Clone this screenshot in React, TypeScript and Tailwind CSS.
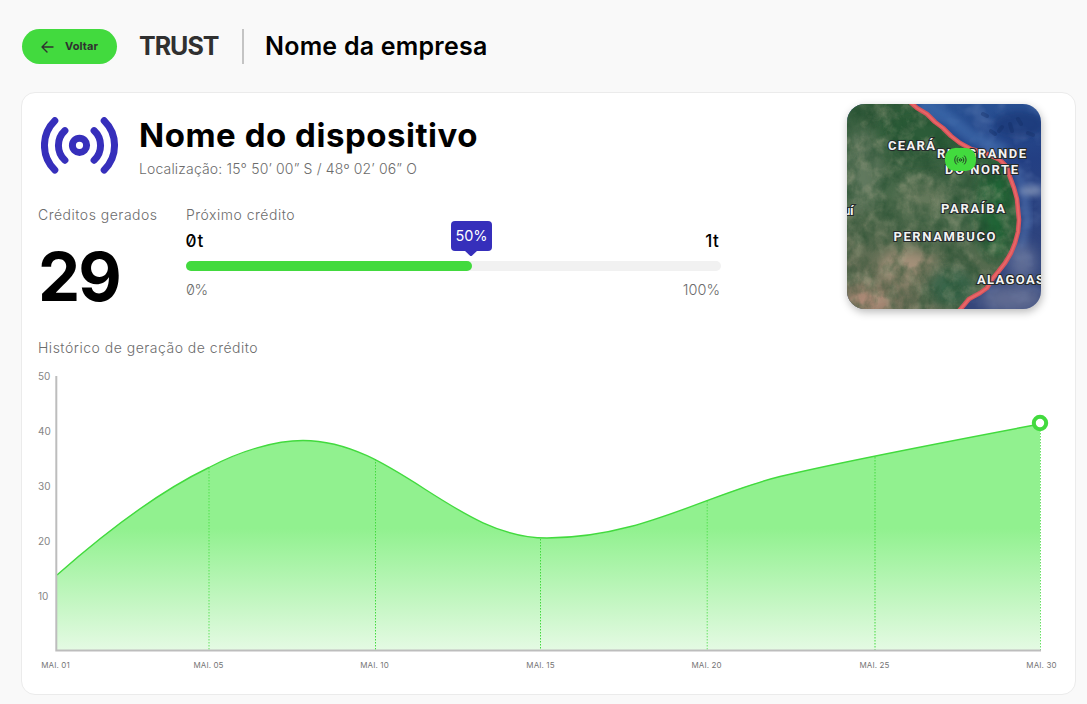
import React from "react";

const COAST =
  "M63 -2 L70 4 L80 10 L88 18 L96 24 L104 32 L113 39 L124 45 L138 49 L153 56 L160 63 L163 73 L167 84 L170 95 L172 116 L171 128 L168 139 L164 149 L158 159 L151 168 L146 174 L140 184 L133 189 L122 195 L117 201 L111 208";

const MAP_LABELS = [
  { text: "CEARÁ", x: 41, y: 46, w: 47 },
  { text: "RIO GRANDE", x: 90, y: 54, w: 89 },
  { text: "DO NORTE", x: 98, y: 69.5, w: 73 },
  { text: "uí", x: -3.5, y: 111, w: 10 },
  { text: "PARAÍBA", x: 94, y: 108.5, w: 64 },
  { text: "PERNAMBUCO", x: 46.5, y: 136.5, w: 102 },
  { text: "ALAGOAS", x: 130, y: 180, w: 67 },
];

const Y_TICKS = [50, 40, 30, 20, 10];
const GUIDES = [
  { x: 209, y: 468, o: 0.8 },
  { x: 375.5, y: 459, o: 1 },
  { x: 540.5, y: 539, o: 1 },
  { x: 707.2, y: 501, o: 0.75 },
  { x: 875, y: 457, o: 1 },
  { x: 1040.5, y: 424, o: 0.8 },
];
const CURVE =
  "M57 575 C100 537 152 495 209 467.5 C240 451 275 440.5 303 440.5 C395 440.5 455 538 547 538 C640 538 705 495 780 476.5 C840 462 950 441 1040 424";

function BroadcastIcon({ className, stroke = 7 }: { className: string; stroke?: number }) {
  return (
    <svg viewBox="0 0 78 57" className={className} fill="none" stroke="currentColor" strokeWidth={stroke} strokeLinecap="round">
      <circle cx="38.5" cy="28.3" r="7.1" />
      <path d="M53.1 13.6A20.2 20.2 0 0 1 53.1 43.2" />
      <path d="M23.9 13.6A20.2 20.2 0 0 0 23.9 43.2" />
      <path d="M63.2 3.7A34.5 34.5 0 0 1 63.2 53" />
      <path d="M13.8 3.7A34.5 34.5 0 0 0 13.8 53" />
    </svg>
  );
}

function DeviceMap() {
  return (
    <div className="relative mt-[11px] mr-[34px] h-[205px] w-[194px] shrink-0 overflow-hidden rounded-[18px] shadow-[1px_3px_8px_rgba(0,0,0,0.28)]">
      <svg viewBox="0 0 194 205" className="block h-full w-full">
        <defs>
          <linearGradient id="land" x1="0.6" y1="0" x2="0.3" y2="1">
            <stop offset="0" stopColor="#315b3a" />
            <stop offset="0.5" stopColor="#47694a" />
            <stop offset="1" stopColor="#6c6f58" />
          </linearGradient>
          <linearGradient id="sea" x1="0" y1="0" x2="0.15" y2="1">
            <stop offset="0" stopColor="#2a5799" />
            <stop offset="0.4" stopColor="#233f83" />
            <stop offset="1" stopColor="#34467b" />
          </linearGradient>
          <filter id="shade" x="0" y="0" width="100%" height="100%" colorInterpolationFilters="sRGB">
            <feTurbulence type="fractalNoise" baseFrequency="0.07 0.05" numOctaves="5" seed="8" />
            <feColorMatrix values="0 0 0 0 0.1  0 0 0 0 0.28  0 0 0 0 0.16  1.8 0 0 0 -0.7" />
          </filter>
          <filter id="light" x="0" y="0" width="100%" height="100%" colorInterpolationFilters="sRGB">
            <feTurbulence type="fractalNoise" baseFrequency="0.06 0.06" numOctaves="5" seed="21" />
            <feColorMatrix values="0 0 0 0 0.62  0 0 0 0 0.63  0 0 0 0 0.52  0 1.8 0 0 -0.8" />
          </filter>
          <filter id="waves" x="0" y="0" width="100%" height="100%" colorInterpolationFilters="sRGB">
            <feTurbulence type="fractalNoise" baseFrequency="0.04 0.05" numOctaves="3" seed="5" />
            <feColorMatrix values="0 0 0 0 0.45  0 0 0 0 0.55  0 0 0 0 0.75  1.8 0 0 0 -0.85" />
          </filter>
          <filter id="soft" x="-50%" y="-50%" width="200%" height="200%">
            <feGaussianBlur stdDeviation="7" />
          </filter>
          <filter id="haze" x="-50%" y="-50%" width="200%" height="200%">
            <feGaussianBlur stdDeviation="3" />
          </filter>
          <clipPath id="landClip">
            <path d={`${COAST} L-5 210 L-5 -5 Z`} />
          </clipPath>
        </defs>
        <rect width="194" height="205" fill="url(#sea)" />
        <rect width="194" height="205" filter="url(#waves)" opacity="0.5" />
        <path d="M66 0L96 20L116 36L150 50" transform="translate(9 -3)" fill="none" stroke="#4472b2" strokeWidth="13" opacity="0.55" filter="url(#haze)" />
        <path d="M165 63L174 95L176 116L170 145" transform="translate(4 0)" fill="none" stroke="#5277b4" strokeWidth="8" opacity="0.6" filter="url(#haze)" />
        <ellipse cx="172" cy="20" rx="25" ry="13" fill="#17336f" opacity="0.5" filter="url(#haze)" />
        <ellipse cx="184" cy="87" rx="12" ry="5" fill="#8f9fbe" opacity="0.7" filter="url(#haze)" />
        <ellipse cx="165" cy="195" rx="32" ry="14" fill="#737b9b" opacity="0.7" filter="url(#soft)" />
        <ellipse cx="175" cy="158" rx="14" ry="18" fill="#7480a2" opacity="0.7" filter="url(#soft)" />
        <path d="M144 27l4 3M152 27l3-4M163 20l2 7M171 15l3 5M181 29l5 2M136 10l4 2" fill="none" stroke="#112b60" strokeWidth="4" strokeLinecap="round" opacity="0.35" />
        <g clipPath="url(#landClip)">
          <rect width="194" height="205" fill="url(#land)" />
          <ellipse cx="72" cy="28" rx="42" ry="28" fill="#285a36" opacity="0.65" filter="url(#soft)" />
          <ellipse cx="15" cy="65" rx="18" ry="42" fill="#6d8068" opacity="0.7" filter="url(#soft)" />
          <ellipse cx="150" cy="105" rx="18" ry="48" fill="#1f6434" opacity="0.9" filter="url(#soft)" />
          <ellipse cx="77" cy="94" rx="27" ry="18" fill="#758165" opacity="0.65" filter="url(#soft)" />
          <ellipse cx="60" cy="163" rx="28" ry="18" fill="#b09680" opacity="0.85" filter="url(#soft)" />
          <ellipse cx="23" cy="196" rx="25" ry="15" fill="#b98f7d" opacity="0.85" filter="url(#soft)" />
          <ellipse cx="105" cy="184" rx="24" ry="20" fill="#36654a" opacity="0.9" filter="url(#soft)" />
          <rect width="194" height="205" filter="url(#light)" opacity="0.7" />
          <rect width="194" height="205" filter="url(#shade)" opacity="0.65" />
        </g>
        <path d={COAST} fill="none" stroke="#d9545b" strokeWidth="4.6" strokeLinejoin="round" />
        <path d={COAST} fill="none" stroke="#ee6e6c" strokeWidth="2" strokeLinejoin="round" opacity="0.7" />
        {MAP_LABELS.map((l) => (
          <text
            key={l.text}
            x={l.x}
            y={l.y}
            textLength={l.w}
            className="fill-[#f3f3f3] stroke-[#252b2b] font-['Roboto',sans-serif] text-[13px] font-bold"
            strokeWidth="2.2"
            paintOrder="stroke"
          >
            {l.text}
          </text>
        ))}
      </svg>
      <div className="absolute top-[44px] left-[98px] flex h-[23px] w-[31px] items-center justify-center rounded-[10px] bg-[#42da3e] text-[#26372a]">
        <BroadcastIcon className="h-[10px] w-[13px]" stroke={6} />
      </div>
    </div>
  );
}

function ProgressPanel() {
  return (
    <div className="w-[535px]">
      <div className="h-5 text-[14px] leading-5 font-light tracking-[0.5px] text-[#6c6c6c]">Próximo crédito</div>
      <div className="mt-[6px] flex h-5 justify-between pr-[2px] text-[17px] leading-5 font-medium text-black">
        <span className="ml-[-0.5px] tracking-[0.8px] [font-feature-settings:'zero']">0t</span>
        <span className="tracking-[0.3px]">1t</span>
      </div>
      <div className="relative mt-[10px] h-[10px] rounded-full bg-[#f1f1f1]">
        <div className="h-full w-[286px] rounded-full bg-[#42da3e]" />
        <div className="absolute -top-[40px] left-[265px] flex h-[30px] w-[41px] items-center justify-center rounded-[4px] bg-[#362fbb] text-[14.5px] text-white">
          50%
          <svg viewBox="0 0 14 6" className="absolute top-[29px] left-[13px] h-[6px] w-[14px] fill-[#362fbb]">
            <path d="M0 0h14L8.2 5.4q-1.2 1-2.4 0Z" />
          </svg>
        </div>
      </div>
      <div className="mt-[9px] flex h-5 justify-between pr-[1px] text-[14.5px] leading-5 font-light text-[#6c6c6c]">
        <span className="tracking-[-0.4px] [font-feature-settings:'zero']">0%</span>
        <span>100%</span>
      </div>
    </div>
  );
}

function HistoryChart() {
  return (
    <div className="mt-[12px]">
      <div className="flex h-[281px]">
        <div className="flex w-[17px] flex-col">
          {Y_TICKS.map((t) => (
            <span key={t} className="h-[55px] text-[10px] leading-[12px] text-[#858585]">{t}</span>
          ))}
        </div>
        <svg viewBox="55 370 995 281" className="block h-[281px] w-[995px] overflow-visible">
          <defs>
            <linearGradient id="area" gradientUnits="userSpaceOnUse" x1="0" y1="424" x2="0" y2="651">
              <stop offset="0" stopColor="#91f18f" />
              <stop offset="0.46" stopColor="#91f18f" />
              <stop offset="1" stopColor="#e5fae4" />
            </linearGradient>
          </defs>
          <path d={`${CURVE} V650 H57 Z`} fill="url(#area)" />
          {GUIDES.map((g) => (
            <line key={g.x} x1={g.x} x2={g.x} y1={g.y} y2="650" stroke="#42da3e" strokeWidth="1" strokeDasharray="1.5 1.5" opacity={g.o} />
          ))}
          <path d={CURVE} fill="none" stroke="#42da3e" strokeWidth="1.4" />
          <path d="M56.3 376V650.5H1041" fill="none" stroke="#bdbdbd" strokeWidth="2" />
          <circle cx="1040" cy="423" r="6.2" fill="white" stroke="#42da3e" strokeWidth="4" />
        </svg>
      </div>
      <div className="mt-[8px] flex h-3 text-center text-[8px] leading-3 tracking-[0.12px] text-[#757575]">
        <span className="w-[35px]">MAI. 01</span>
        <span className="ml-[118px] w-[35px]">MAI. 05</span>
        <span className="ml-[131px] w-[35px]">MAI. 10</span>
        <span className="ml-[131px] w-[35px]">MAI. 15</span>
        <span className="ml-[131px] w-[35px]">MAI. 20</span>
        <span className="ml-[133px] w-[35px]">MAI. 25</span>
        <span className="ml-[132px] w-[35px]">MAI. 30</span>
      </div>
    </div>
  );
}

export default function App() {
  return (
    <div className="h-[704px] w-[1087px] overflow-hidden bg-[#f9f9f9] pt-[29px] pl-[21px] font-['Inter',sans-serif] whitespace-nowrap">
      <header className="ml-px flex h-[35px] items-center">
        <button className="flex h-[35px] w-[95px] shrink-0 items-center rounded-full bg-[#42da3e] pl-[19px] text-[11px] font-bold tracking-[0.1px] text-[#303030]">
          <svg viewBox="0 0 13 12" className="mr-[11px] h-3 w-[13px]" fill="none" stroke="currentColor" strokeWidth="1.4" strokeLinecap="round" strokeLinejoin="round">
            <path d="M12 6H1M6 1L1 6l5 5" />
          </svg>
          Voltar
        </button>
        <span className="ml-[22px] w-[80px] text-[25px] font-bold tracking-[-1px] text-[#303030]">TRUST</span>
        <div className="ml-[23px] h-[35px] w-[2px] bg-[#c4c4c4]" />
        <h1 className="ml-[21px] text-[25px] font-semibold tracking-[0.22px] text-black">Nome da empresa</h1>
      </header>

      <main className="mt-[28px] h-[603px] w-[1055px] rounded-[14px] border border-[#ebebeb] bg-white pl-[16px]">
        <div className="flex h-[244px] justify-between">
          <div>
            <div className="flex pt-[19px]">
              <BroadcastIcon className="mt-[5px] ml-[3px] h-[57px] w-[78px] text-[#362fbb]" />
              <div className="ml-[20px]">
                <h2 className="h-[45px] text-[33px] leading-[47px] font-bold tracking-[0.53px] text-black">Nome do dispositivo</h2>
                <p className="h-5 text-[14px] leading-[23px] font-light tracking-[0.15px] text-[#6c6c6c]">Localização: 15° 50’ 00” S / 48º 02’ 06” O</p>
              </div>
            </div>
            <div className="mt-[28px] flex">
              <div className="w-[148px]">
                <div className="h-5 text-[14px] leading-5 font-light tracking-[0.5px] text-[#6c6c6c]">Créditos gerados</div>
                <div className="mt-[17px] h-[70px] text-[67px] leading-[70px] font-bold tracking-[-2px] text-black">29</div>
              </div>
              <ProgressPanel />
            </div>
          </div>
          <DeviceMap />
        </div>
        <div className="mt-px h-5 text-[14px] leading-5 font-light tracking-[0.5px] text-[#6c6c6c]">Histórico de geração de crédito</div>
        <HistoryChart />
      </main>
    </div>
  );
}
